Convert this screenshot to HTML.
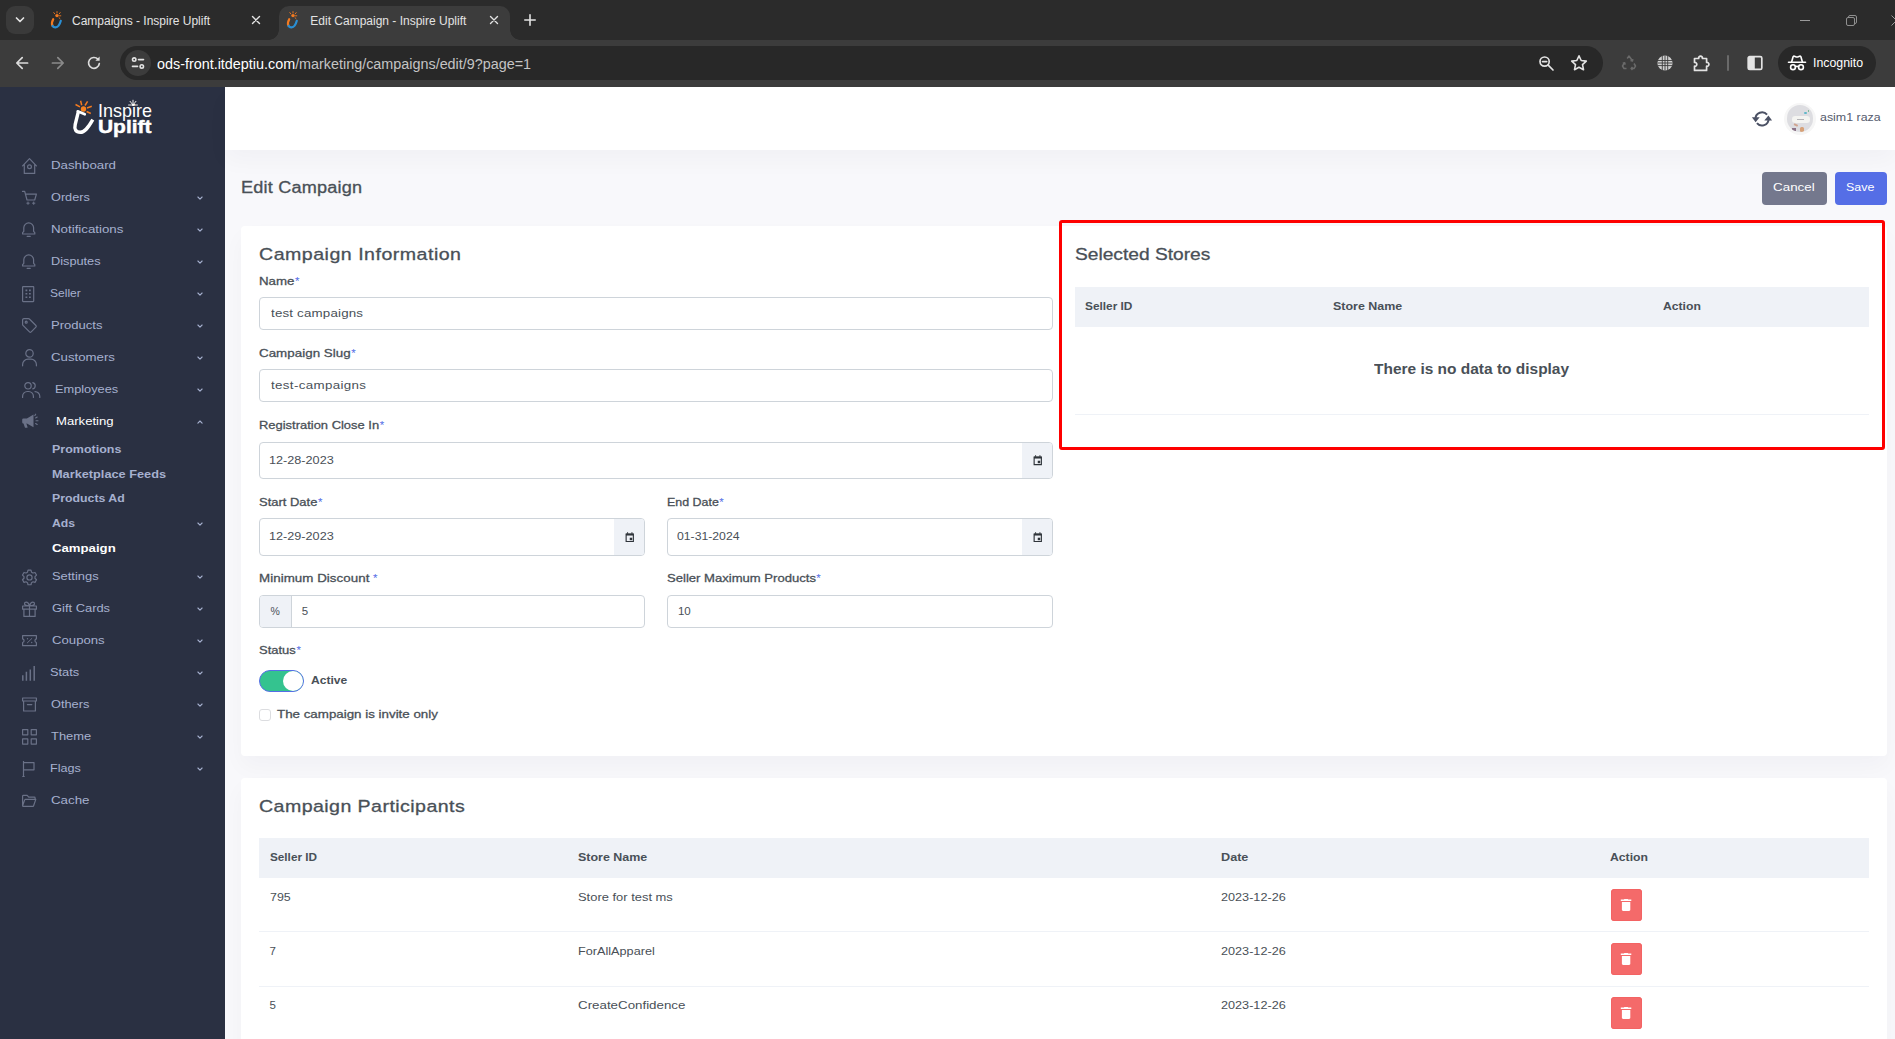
<!DOCTYPE html>
<html lang="en"><head>
<meta charset="utf-8">
<title>Edit Campaign - Inspire Uplift</title>
<style>
*{box-sizing:border-box;margin:0;padding:0}
html,body{width:1895px;height:1039px;overflow:hidden;background:#f8f8fb;font-family:"Liberation Sans",sans-serif;color:#495057;font-size:12px}
.abs{position:absolute}
span.t{position:absolute;white-space:pre;line-height:1}
/* ---------- browser chrome ---------- */
#tabstrip{position:absolute;left:0;top:0;width:1895px;height:40px;background:#2b2b2b}
#toolbar{position:absolute;left:0;top:40px;width:1895px;height:47px;background:#3c3c3c}
#tabsearch{position:absolute;left:6px;top:6px;width:28px;height:28px;border-radius:9px;background:#3a3a3a}
#tab2{position:absolute;left:279px;top:6px;width:231px;height:34px;background:#3c3c3c;border-radius:10px 10px 0 0}
#tab2:before,#tab2:after{content:"";position:absolute;bottom:0;width:10px;height:10px;background:radial-gradient(circle at 0 0,rgba(0,0,0,0) 9.5px,#3c3c3c 10px)}
#tab2:before{left:-10px}
#tab2:after{right:-10px;background:radial-gradient(circle at 100% 0,rgba(0,0,0,0) 9.5px,#3c3c3c 10px)}
.tabt{font-size:12px;color:#e3e3e3}
#omni{position:absolute;left:120px;top:46px;width:1483px;height:34px;border-radius:17px;background:#282828}
#siteinfo{position:absolute;left:125px;top:50px;width:26px;height:26px;border-radius:13px;background:#3c3c3c}
#incog{position:absolute;left:1778px;top:46px;width:98px;height:34px;border-radius:17px;background:#282828}
/* ---------- app ---------- */
#sidebar{position:absolute;left:0;top:87px;width:225px;height:952px;background:#2a3042}
#header{position:absolute;left:225px;top:87px;width:1670px;height:63px;background:#fff;box-shadow:0 11px 22px rgba(18,38,63,.03)}
.mt{font-size:11.500px;color:#a6b0cf}
.st{font-size:11.500px;font-weight:700;color:#a6b0cf}
svg.ic{position:absolute;left:20px;width:22px;height:22px;fill:none;stroke:#6a7187;stroke-width:1.200;stroke-linecap:round;stroke-linejoin:round}
svg.ch{position:absolute;left:196.200px;width:8px;height:8px;fill:none;stroke:#a6b0cf;stroke-width:1.100;stroke-linecap:round;stroke-linejoin:round}
.m5{-webkit-text-stroke:.300px currentColor}
.card{position:absolute;background:#fff;border-radius:4px;box-shadow:0 11px 22px rgba(18,38,63,.03)}
.h4{font-size:18px;color:#495057}
.lbl{font-size:12px;color:#495057}
.lbl i{font-style:normal;color:#556ee6}
.inp{position:absolute;background:#fff;border:1px solid #ced4da;border-radius:4px}
.inp .t{font-size:12px;color:#495057}
.addon{position:absolute;top:0;bottom:0;background:#eff2f7}
.th{position:absolute;background:#eff2f7}
.th .t,.tht{font-size:11.500px;font-weight:700;color:#495057}
.td{font-size:11.500px;color:#495057}
.hr{position:absolute;height:1px;background:#eff2f7}
.del{position:absolute;border-radius:3.500px;background:#f46a6a;box-shadow:inset 0 0 0 1px #f36363}
.del svg{position:absolute;left:0;top:0;width:31px;height:32px;fill:#fff}
.btn{position:absolute;height:33px;border-radius:4px}
.btn .t{color:#fff;font-size:12px;top:10px}
</style>
</head>
<body>
<!-- ======= BROWSER CHROME ======= -->
<div id="tabstrip">
  <div id="tabsearch"></div>
  <div id="tab2"></div>
</div>
<div id="toolbar"></div>
<div id="omni"></div>
<div id="siteinfo"></div>
<div id="incog"></div>
<div id="chrome-fg" class="abs" style="left:0;top:0;width:1895px;height:87px">
<!-- tab search chevron -->
<svg class="abs" style="left:14px;top:15px" width="12" height="10" viewBox="0 0 12 10"><path d="M2.5 3 L6 6.5 L9.5 3" fill="none" stroke="#e3e3e3" stroke-width="1.7" stroke-linecap="round" stroke-linejoin="round"></path></svg>
<!-- favicons -->
<svg class="abs" style="left:49px;top:11px" width="16" height="18" viewBox="0 0 16 18"><g><path d="M4.2 8.2 C3 10.5 2.6 13 3.4 14.6" fill="none" stroke="#f47a20" stroke-width="2.2" stroke-linecap="round"></path><path d="M3.6 15 C5 17 8 16.6 9.6 14.6 C10.8 13 11.4 11.4 11.8 9.8" fill="none" stroke="#2a8fd4" stroke-width="2.2" stroke-linecap="round"></path><circle cx="8" cy="4.6" r="1.7" fill="#f47a20"></circle><path d="M8 .6v1.4M4.8 1.6l.9 1.2M11.2 1.6l-.9 1.2M11.8 4.8h-1.3M11 7.6l-1-.9" stroke="#f47a20" stroke-width=".9" stroke-linecap="round"></path></g></svg>
<svg class="abs" style="left:285px;top:11px" width="16" height="18" viewBox="0 0 16 18"><g><path d="M4.2 8.2 C3 10.5 2.6 13 3.4 14.6" fill="none" stroke="#f47a20" stroke-width="2.2" stroke-linecap="round"></path><path d="M3.6 15 C5 17 8 16.6 9.6 14.6 C10.8 13 11.4 11.4 11.8 9.8" fill="none" stroke="#2a8fd4" stroke-width="2.2" stroke-linecap="round"></path><circle cx="8" cy="4.6" r="1.7" fill="#f47a20"></circle><path d="M8 .6v1.4M4.8 1.6l.9 1.2M11.2 1.6l-.9 1.2M11.8 4.8h-1.3M11 7.6l-1-.9" stroke="#f47a20" stroke-width=".9" stroke-linecap="round"></path></g></svg>
<span class="t tabt" style="left: 72px; top: 15px;">Campaigns - Inspire Uplift</span>
<span class="t tabt" style="left: 310.3px; top: 15px;">Edit Campaign - Inspire Uplift</span>
<!-- close x -->
<svg class="abs" style="left:251px;top:15px" width="10" height="10" viewBox="0 0 10 10"><path d="M1.500 1.500l7 7M8.500 1.500l-7 7" stroke="#e3e3e3" stroke-width="1.400" stroke-linecap="round"></path></svg>
<svg class="abs" style="left:489px;top:15px" width="10" height="10" viewBox="0 0 10 10"><path d="M1.500 1.500l7 7M8.500 1.500l-7 7" stroke="#e3e3e3" stroke-width="1.400" stroke-linecap="round"></path></svg>
<!-- plus -->
<svg class="abs" style="left:524px;top:14px" width="12" height="12" viewBox="0 0 12 12"><path d="M6 .8v10.4M.8 6h10.4" stroke="#e3e3e3" stroke-width="1.6" stroke-linecap="round"></path></svg>
<!-- window controls -->
<div class="abs" style="left:1800px;top:20px;width:10px;height:1px;background:#9a9a9a"></div>
<svg class="abs" style="left:1846px;top:15px" width="11" height="11" viewBox="0 0 11 11"><rect x=".5" y="2.5" width="8" height="8" rx="1.5" fill="none" stroke="#8f8f8f"></rect><path d="M2.5 2.5v-.5a1.5 1.5 0 0 1 1.5-1.5h5a1.500 1.500 0 0 1 1.500 1.500v5a1.500 1.500 0 0 1-1.500 1.500h-.5" fill="none" stroke="#8f8f8f"></path></svg>
<svg class="abs" style="left:1891px;top:15px" width="10" height="11" viewBox="0 0 10 11"><path d="M.5 .5l10 10M10.500 .5l-10 10" stroke="#9a9a9a" stroke-width="1"></path></svg>
<!-- nav arrows -->
<svg class="abs" style="left:14px;top:55px" width="16" height="16" viewBox="0 0 16 16"><path d="M13.600 8H3M8.200 2.600L2.800 8L8.200 13.400" fill="none" stroke="#dcdcdc" stroke-width="1.7" stroke-linecap="round" stroke-linejoin="round"></path></svg>
<svg class="abs" style="left:50px;top:55px" width="16" height="16" viewBox="0 0 16 16"><path d="M2.400 8H13M7.800 2.600L13.200 8L7.800 13.400" fill="none" stroke="#8a8a8a" stroke-width="1.7" stroke-linecap="round" stroke-linejoin="round"></path></svg>
<svg class="abs" style="left:86px;top:55px" width="16" height="16" viewBox="0 0 16 16"><path d="M13.300 8.600A5.400 5.400 0 1 1 11.900 4.200" fill="none" stroke="#dcdcdc" stroke-width="1.700" stroke-linecap="round"></path><path d="M13.600 1.600v4.200h-4.200z" fill="#dcdcdc"></path></svg>
<!-- site info (tune) icon -->
<svg class="abs" style="left:130px;top:55px" width="16" height="16" viewBox="0 0 16 16"><g fill="none" stroke="#e3e3e3" stroke-width="1.600" stroke-linecap="round"><circle cx="4.200" cy="4.600" r="1.700"></circle><path d="M8.500 4.600h5"></path><circle cx="11.800" cy="11.400" r="1.700"></circle><path d="M2.500 11.400h5"></path></g></svg>
<!-- URL -->
<span class="t" style="left: 157px; top: 56.7px; font-size: 14px; color: rgb(196, 196, 196); transform: scaleX(1.026); transform-origin: 0px 0px;"><span style="color:#fff">ods-front.itdeptiu.com</span>/marketing/campaigns/edit/9?page=1</span>
<!-- zoom icon -->
<svg class="abs" style="left:1538px;top:55px" width="17" height="17" viewBox="0 0 17 17"><g fill="none" stroke="#e3e3e3" stroke-width="1.700" stroke-linecap="round"><circle cx="6.600" cy="6.600" r="4.600"></circle><path d="M10.200 10.200l4.800 4.800M4.500 6.600h4.200"></path></g></svg>
<!-- star -->
<svg class="abs" style="left:1570px;top:54px" width="18" height="18" viewBox="0 0 18 18"><path d="M9 1.800l2.200 4.700 5.100.6-3.800 3.500 1 5.100L9 13.200l-4.500 2.500 1-5.100-3.800-3.500 5.100-.6z" fill="none" stroke="#e3e3e3" stroke-width="1.600" stroke-linejoin="round"></path></svg>
<!-- recycle (dim) -->
<svg class="abs" style="left:1621px;top:55px" width="16" height="16" viewBox="0 0 16 16"><g fill="none" stroke="#6a6a6a" stroke-width="1.500" stroke-linejoin="round"><path d="M6.200 3.500L8 1l1.800 2.500L11 5.500M9.500 5.600l1.900.4.500-1.900"></path><path d="M13 8.500l1.500 2.500-1.500 2.500H10.500M11.500 12l-1.400 1.500 1.400 1.400"></path><path d="M5.500 13.500H3L1.500 11 3 8.500M1.800 8.200l1.900-.5.500 1.900"></path></g></svg>
<!-- globe -->
<svg class="abs" style="left:1657px;top:55px" width="16" height="16" viewBox="0 0 16 16"><circle cx="8" cy="8" r="7.600" fill="#d0d0d0"></circle><g stroke="#3c3c3c" stroke-width=".9" fill="none"><path d="M.5 5.500h15M.5 8h15M.5 10.600h15M5.300 .5v15M8 .5v15M10.700 .5v15"></path></g></svg>
<!-- puzzle -->
<svg class="abs" style="left:1692px;top:54px" width="19" height="18" viewBox="0 0 19 18"><path d="M2.500 4.500h4.200a1.900 1.900 0 1 1 3.700 0h4.200v4a1.900 1.900 0 1 1 0 3.700v4.200H2.500v-4.200a1.900 1.900 0 1 0 0-3.700z" fill="none" stroke="#e3e3e3" stroke-width="1.700" stroke-linejoin="round"></path></svg>
<!-- separator -->
<div class="abs" style="left:1727px;top:55px;width:2px;height:16px;background:#6a6a6a;border-radius:1px"></div>
<!-- side panel -->
<svg class="abs" style="left:1747px;top:55px" width="16" height="16" viewBox="0 0 16 16"><rect x="1.200" y="1.600" width="13.600" height="12.800" rx="1.500" fill="none" stroke="#e3e3e3" stroke-width="1.700"></rect><rect x="1.500" y="2" width="6.300" height="12" fill="#e3e3e3"></rect></svg>
<!-- incognito -->
<svg class="abs" style="left:1787px;top:54px" width="20" height="18" viewBox="0 0 20 18"><g fill="none" stroke="#fff" stroke-width="1.600" stroke-linecap="round" stroke-linejoin="round"><path d="M1.500 8.200h17"></path><path d="M4.600 8l1.500-5.200c.2-.6.700-.8 1.300-.6l1.300.5c.8.300 1.800.3 2.600 0l1.300-.5c.6-.2 1.100 0 1.300.6L15.400 8"></path><circle cx="6" cy="13.200" r="2.400"></circle><circle cx="14" cy="13.200" r="2.400"></circle><path d="M8.400 12.800c1-.7 2.200-.7 3.200 0"></path></g></svg>
<span class="t" style="left: 1813px; top: 57px; font-size: 12.5px; color: rgb(255, 255, 255); transform: scaleX(0.986); transform-origin: 0px 0px;">Incognito</span>

</div>

<!-- ======= APP ======= -->
<div id="sidebar"></div>
<div id="sidelayer" class="abs" style="left:0;top:0;width:225px;height:1039px">
<svg class="abs" style="left:70px;top:97px" width="30" height="42" viewBox="70 97 30 42">
<g stroke="#f47b20" stroke-width="1.500" stroke-linecap="butt" fill="none">
<path d="M81.700 105.300L80.600 100.800"></path><path d="M85 105.500L87.600 101.300"></path><path d="M80 106.800L75.500 104.500"></path><path d="M87 108L91.800 106.300"></path><path d="M86.600 111.500L90.800 113.500"></path>
</g>
<circle cx="83.500" cy="109" r="2.700" fill="#f58220"></circle>
<path d="M78.300 111.800L75.200 124.500C74 129.500 76 132.300 80.200 132.300C84.500 132.300 87.800 128.300 92.800 119.600" fill="none" stroke="#fff" stroke-width="3.400" stroke-linecap="butt" stroke-linejoin="round"></path>
<path d="M77.700 111.300L84.800 114.300" fill="none" stroke="#fff" stroke-width="2.600" stroke-linecap="round"></path>
</svg>
<span class="t" style="left: 97.5px; top: 101px; font-size: 19px; color: rgb(255, 255, 255); line-height: 19px; transform: scaleX(0.947); transform-origin: 0px 0px;">Inspire</span>
<span class="t" style="left: 97.5px; top: 117px; font-size: 18.5px; font-weight: 700; color: rgb(255, 255, 255); line-height: 19px; -webkit-text-stroke: 0.45px rgb(255, 255, 255); transform: scaleX(1.132); transform-origin: 0px 0px;">Uplift</span>
<svg class="abs" style="left:127.300px;top:99.300px" width="12" height="8" viewBox="0 0 12 8"><g stroke="#fff" stroke-width=".9" fill="none"><path d="M6 6V.8M6 6L2.800 2M6 6l3.200-4M6 6H1.200M6 6h4.800"></path></g><circle cx="6" cy="6" r="1.100" fill="#fff"></circle></svg>
<svg class="ic" style="top:155px" viewBox="0 0 22 22"><path d="M2.600 10.800L9.500 3.700l6.900 7.100M4.300 9.600v8.800h10.400V9.600"></path><circle cx="9.500" cy="11.800" r="1.900"></circle></svg>
<span class="t mt" style="left: 51.3px; top: 160px; transform: scaleX(1.155); transform-origin: 0px 0px;">Dashboard</span>
<svg class="ic" style="top:187px" viewBox="0 0 22 22"><path d="M2.500 4.400h2.200l2.300 8.600h7.700l1.700-5.900H5.500"></path><path d="M8 15v2.400M6.800 16.200h2.400M13.700 15v2.400M12.500 16.200h2.400" stroke-width="1"></path></svg>
<span class="t mt" style="left: 51.3px; top: 192px; transform: scaleX(1.104); transform-origin: 0px 0px;">Orders</span>
<svg class="ch" style="top:193.8px" viewBox="0 0 8 8"><path d="M1.900 3L4 5.100L6.100 3"></path></svg>
<svg class="ic" style="top:219px" viewBox="0 0 22 22"><path d="M2.600 15V13.700l1.200-1.400V8.800a4.900 4.900 0 0 1 9.800 0v3.500l1.200 1.400V15zM7.200 17.400h3"></path></svg>
<span class="t mt" style="left: 50.5px; top: 224px; transform: scaleX(1.156); transform-origin: 0px 0px;">Notifications</span>
<svg class="ch" style="top:225.8px" viewBox="0 0 8 8"><path d="M1.900 3L4 5.100L6.100 3"></path></svg>
<svg class="ic" style="top:251px" viewBox="0 0 22 22"><path d="M2.600 15V13.700l1.200-1.400V8.800a4.900 4.900 0 0 1 9.800 0v3.500l1.200 1.400V15zM7.200 17.400h3"></path></svg>
<span class="t mt" style="left: 50.5px; top: 256px; transform: scaleX(1.108); transform-origin: 0px 0px;">Disputes</span>
<svg class="ch" style="top:257.8px" viewBox="0 0 8 8"><path d="M1.900 3L4 5.100L6.100 3"></path></svg>
<svg class="ic" style="top:283px" viewBox="0 0 22 22"><rect x="2.600" y="3.600" width="11.100" height="15" rx=".5"></rect><path d="M5.500 6.600h1.800v1.600H5.500zM9 6.600h1.800v1.600H9zM5.500 10h1.800v1.600H5.500zM9 10h1.800v1.600H9zM5.500 13.400h1.800V15H5.500zM9 13.400h1.800V15H9z" fill="#6a7187" stroke="none"></path></svg>
<span class="t mt" style="left: 49.8px; top: 288px; transform: scaleX(1.047); transform-origin: 0px 0px;">Seller</span>
<svg class="ch" style="top:289.8px" viewBox="0 0 8 8"><path d="M1.900 3L4 5.100L6.100 3"></path></svg>
<svg class="ic" style="top:315px" viewBox="0 0 22 22"><path d="M2.600 5v4.400c0 .4.200.8.400 1l6.500 6.500c.5.500 1.200.5 1.700 0l4.700-4.700c.5-.5.500-1.200 0-1.700L9.400 4c-.3-.3-.6-.4-1-.4H4c-.8 0-1.400.6-1.400 1.400z"></path><circle cx="6.200" cy="7.200" r="1"></circle></svg>
<span class="t mt" style="left: 51.3px; top: 320px; transform: scaleX(1.135); transform-origin: 0px 0px;">Products</span>
<svg class="ch" style="top:321.8px" viewBox="0 0 8 8"><path d="M1.900 3L4 5.100L6.100 3"></path></svg>
<svg class="ic" style="top:347px" viewBox="0 0 22 22"><circle cx="9.500" cy="6.400" r="3.700"></circle><path d="M2.600 18.800v-1.200a5.400 5.400 0 0 1 5.400-5.400h3a5.400 5.400 0 0 1 5.400 5.400v1.200"></path></svg>
<span class="t mt" style="left: 51.3px; top: 352px; transform: scaleX(1.151); transform-origin: 0px 0px;">Customers</span>
<svg class="ch" style="top:353.8px" viewBox="0 0 8 8"><path d="M1.900 3L4 5.100L6.100 3"></path></svg>
<svg class="ic" style="top:379px" viewBox="0 0 22 22"><circle cx="8" cy="6.800" r="3.200"></circle><path d="M2.600 18.500v-1.200a4.800 4.800 0 0 1 4.800-4.800h1.200a4.800 4.800 0 0 1 4.800 4.800v1.200"></path><path d="M12.800 3.700a3.200 3.200 0 0 1 0 6.200M15 12.600a4.800 4.800 0 0 1 4.800 4.800v1.100"></path></svg>
<span class="t mt" style="left: 55.1px; top: 384px; transform: scaleX(1.111); transform-origin: 0px 0px;">Employees</span>
<svg class="ch" style="top:385.8px" viewBox="0 0 8 8"><path d="M1.900 3L4 5.100L6.100 3"></path></svg>
<svg class="ic" style="top:411px" viewBox="0 0 22 22"><g fill="#6a7187" stroke="none"><path d="M2.200 8.600a1.200 1.200 0 0 1 1.200-1.200h3.500l6.600-3.800v12.600L6.900 12.400H6.400l1.100 3.500a.7.700 0 0 1-.7.900H5.500a.7.700 0 0 1-.7-.5l-1.300-3.900H3.400a1.200 1.200 0 0 1-1.200-1.200z"></path></g><path d="M15.600 7l1.600-1M16 9.800h2M15.600 12.500l1.600 1M14.800 4.600l.9-1.400" stroke-width="1.100"></path></svg>
<span class="t mt" style="left: 55.9px; top: 416px; color: rgb(255, 255, 255); transform: scaleX(1.141); transform-origin: 0px 0px;">Marketing</span>
<svg class="ch" style="top:417.8px" viewBox="0 0 8 8"><path d="M1.900 5.100L4 3L6.100 5.100"></path></svg>
<svg class="ic" style="top:566px" viewBox="0 0 22 22"><circle cx="9.500" cy="11.400" r="2.600"></circle><path d="M8 3.400h3l.5 2.100 1.500.9 2-.6 1.500 2.600-1.500 1.500v1.700l1.500 1.500-1.500 2.600-2-.6-1.500.9-.5 2.100H8l-.5-2.100-1.500-.9-2 .6-1.500-2.600L4 11.600V9.900L2.500 8.400 4 5.800l2 .6 1.500-.9z" transform="translate(0,.65)"></path></svg>
<span class="t mt" style="left: 51.6px; top: 571px; transform: scaleX(1.121); transform-origin: 0px 0px;">Settings</span>
<svg class="ch" style="top:572.8px" viewBox="0 0 8 8"><path d="M1.900 3L4 5.100L6.100 3"></path></svg>
<svg class="ic" style="top:598px" viewBox="0 0 22 22"><path d="M2.600 8h13.800v3.200H2.600zM3.900 11.200v7.200h11.200v-7.200M9.500 8v10.400M9.500 7.800c-.8-2.600-2-3.600-3.300-3.600-1 0-1.700.7-1.700 1.600 0 1.200 1 2 5 2zM9.500 7.800c.8-2.600 2-3.600 3.300-3.600 1 0 1.700.7 1.700 1.600 0 1.200-1 2-5 2z"></path></svg>
<span class="t mt" style="left: 51.6px; top: 603px; transform: scaleX(1.122); transform-origin: 0px 0px;">Gift Cards</span>
<svg class="ch" style="top:604.8px" viewBox="0 0 8 8"><path d="M1.900 3L4 5.100L6.100 3"></path></svg>
<svg class="ic" style="top:630px" viewBox="0 0 22 22"><path d="M2.600 5.600h13.800v3.200a1.900 1.900 0 0 0 0 3.700v3.200H2.600v-3.200a1.900 1.900 0 0 0 0-3.700z"></path><path d="M7.400 12.800l4.400-4.300" stroke-width="1"></path><circle cx="7.500" cy="8.800" r=".7" fill="#6a7187" stroke="none"></circle><circle cx="11.700" cy="12.500" r=".7" fill="#6a7187" stroke="none"></circle></svg>
<span class="t mt" style="left: 51.6px; top: 635px; transform: scaleX(1.144); transform-origin: 0px 0px;">Coupons</span>
<svg class="ch" style="top:636.8px" viewBox="0 0 8 8"><path d="M1.900 3L4 5.100L6.100 3"></path></svg>
<svg class="ic" style="top:662px" viewBox="0 0 22 22"><path d="M2.800 13.200v5.600M6.400 9.800v9M10.300 7.400v11.400M14.200 4v14.800" stroke-width="1.500" stroke-linecap="butt"></path></svg>
<span class="t mt" style="left: 49.5px; top: 667px; transform: scaleX(1.114); transform-origin: 0px 0px;">Stats</span>
<svg class="ch" style="top:668.8px" viewBox="0 0 8 8"><path d="M1.900 3L4 5.100L6.100 3"></path></svg>
<svg class="ic" style="top:694px" viewBox="0 0 22 22"><path d="M2.600 4h13.800v3H2.600zM3.600 7v10h11.800V7M7.400 10.600h4.400"></path></svg>
<span class="t mt" style="left: 51.4px; top: 699px; transform: scaleX(1.11); transform-origin: 0px 0px;">Others</span>
<svg class="ch" style="top:700.8px" viewBox="0 0 8 8"><path d="M1.900 3L4 5.100L6.100 3"></path></svg>
<svg class="ic" style="top:726px" viewBox="0 0 22 22"><rect x="2.600" y="3.600" width="5.200" height="5.200"></rect><rect x="11.200" y="3.600" width="5.200" height="5.200"></rect><rect x="2.600" y="12.900" width="5.200" height="5.200"></rect><rect x="11.200" y="12.900" width="5.200" height="5.200"></rect></svg>
<span class="t mt" style="left: 51.4px; top: 731px; transform: scaleX(1.123); transform-origin: 0px 0px;">Theme</span>
<svg class="ch" style="top:732.8px" viewBox="0 0 8 8"><path d="M1.900 3L4 5.100L6.100 3"></path></svg>
<svg class="ic" style="top:758px" viewBox="0 0 22 22"><path d="M3.500 3v15.700M2.300 18.500h2.400M3.500 4.600H14v7.200H3.500" stroke-linecap="butt"></path></svg>
<span class="t mt" style="left: 49.5px; top: 763px; transform: scaleX(1.095); transform-origin: 0px 0px;">Flags</span>
<svg class="ch" style="top:764.8px" viewBox="0 0 8 8"><path d="M1.900 3L4 5.100L6.100 3"></path></svg>
<svg class="ic" style="top:790px" viewBox="0 0 22 22"><path d="M2.600 15.500V6.200c0-.4.300-.8.800-.8h3.800l1.500 1.700h5.600c.4 0 .8.300.8.800v1.600M2.600 15.700L4.700 9.900c.1-.3.400-.5.700-.5h10.400l-2.200 6.400c-.1.300-.4.500-.7.500H3.300c-.4 0-.7-.3-.7-.6z"></path></svg>
<span class="t mt" style="left: 51.4px; top: 795px; transform: scaleX(1.158); transform-origin: 0px 0px;">Cache</span>
<span class="t st" style="left: 52.3px; top: 444px; transform: scaleX(1.085); transform-origin: 0px 0px;">Promotions</span>
<span class="t st" style="left: 52.3px; top: 469px; transform: scaleX(1.108); transform-origin: 0px 0px;">Marketplace Feeds</span>
<span class="t st" style="left: 52.3px; top: 493px; transform: scaleX(1.071); transform-origin: 0px 0px;">Products Ad</span>
<span class="t st" style="left: 52.3px; top: 518px; transform: scaleX(1.063); transform-origin: 0px 0px;">Ads</span>
<svg class="ch" style="top:519.8px" viewBox="0 0 8 8"><path d="M1.900 3L4 5.100L6.100 3"></path></svg>
<span class="t st" style="left: 52.3px; top: 543px; color: rgb(255, 255, 255); transform: scaleX(1.146); transform-origin: 0px 0px;">Campaign</span>
</div>
<div id="header">
<svg class="abs" style="left:1526px;top:22.500px" width="22" height="18" viewBox="0 0 22 18"><g fill="none" stroke="#4b5164" stroke-width="2"><path d="M4.400 8.900A6.600 6.600 0 0 1 16.060 4.660"></path><path d="M17.600 8.900A6.600 6.600 0 0 1 5.940 13.140"></path></g><path d="M0.900 7.200h7.800l-4.100 5z" fill="#4b5164"></path><path d="M21.100 10.400h-7.800l4.100-5z" fill="#4b5164"></path></svg>
<div class="abs" style="left:1559px;top:15.500px;width:31.600px;height:32px;border-radius:16px;background:#f6f6f6"></div>
<div class="abs" style="left:1562px;top:18.300px;width:26px;height:27px;border-radius:13.500px;background:#dddde1;overflow:hidden">
  <div class="abs" style="left:4.500px;top:11px;width:18px;height:6.500px;border-radius:3.250px;background:#f4f4f1"></div>
  <div class="abs" style="left:10px;top:13.300px;width:7px;height:1.500px;background:#b4b4b8"></div>
  <div class="abs" style="left:5px;top:22.500px;width:4px;height:3.500px;background:#7d6078;opacity:.85"></div>
  <div class="abs" style="left:13px;top:22px;width:3.500px;height:4.500px;border-radius:1.500px;background:#d69a6c;opacity:.9"></div>
  <div class="abs" style="left:7px;top:18.500px;width:4px;height:1.500px;background:#d0a48e;transform:rotate(25deg)"></div>
  <div class="abs" style="left:17px;top:6.500px;width:2.500px;height:2.500px;border-radius:1.300px;background:#62b8c9"></div>
  <div class="abs" style="left:20.500px;top:4.500px;width:1.600px;height:2px;background:#7fbc95"></div>
</div>
<span class="t" style="left: 1595.3px; top: 25.3px; font-size: 11.5px; color: rgb(85, 91, 109); transform: scaleX(1.079); transform-origin: 0px 0px;">asim1 raza</span>

</div>
<div id="content" class="abs" style="left:0;top:0;width:1895px;height:1039px">
<span class="t m5" style="left: 241.2px; top: 180px; font-size: 15.6px; letter-spacing: 0.17px; transform: scaleX(1.16); transform-origin: 0px 0px;">Edit Campaign</span>
<div class="btn" style="left:1762px;top:172px;width:65px;height:33px;background:#74788d"></div>
<span class="t" style="left: 1773.2px; top: 182px; font-size: 11.5px; color: rgb(255, 255, 255); letter-spacing: 0.04px; transform: scaleX(1.16); transform-origin: 0px 0px;">Cancel</span>
<div class="btn" style="left:1835px;top:172px;width:52px;height:33px;background:#556ee6"></div>
<span class="t" style="left: 1846px; top: 182px; font-size: 11.5px; color: rgb(255, 255, 255); transform: scaleX(1.083); transform-origin: 0px 0px;">Save</span>
<div class="card" style="left:241px;top:226px;width:1646px;height:530px;"></div>
<span class="t m5" style="left: 259.2px; top: 247px; font-size: 16.9px; letter-spacing: 0.42px; transform: scaleX(1.16); transform-origin: 0px 0px;">Campaign Information</span>
<span class="t m5 lbl" style="left: 259px; top: 276px; font-size: 11.5px; transform: scaleX(1.154); transform-origin: 0px 0px;">Name</span>
<span class="t" style="left:295.00px;top:276px;font-size:11.5px;color:#556ee6">*</span>
<span class="t m5 lbl" style="left: 259px; top: 348px; font-size: 11.5px; letter-spacing: 0.03px; transform: scaleX(1.16); transform-origin: 0px 0px;">Campaign Slug</span>
<span class="t" style="left:351.30px;top:348px;font-size:11.5px;color:#556ee6">*</span>
<span class="t m5 lbl" style="left: 259px; top: 420px; font-size: 11.5px; transform: scaleX(1.125); transform-origin: 0px 0px;">Registration Close In</span>
<span class="t" style="left:379.70px;top:420px;font-size:11.5px;color:#556ee6">*</span>
<span class="t m5 lbl" style="left: 259px; top: 497px; font-size: 11.5px; transform: scaleX(1.128); transform-origin: 0px 0px;">Start Date</span>
<span class="t" style="left:318.00px;top:497px;font-size:11.5px;color:#556ee6">*</span>
<span class="t m5 lbl" style="left: 666.8px; top: 497px; font-size: 11.5px; transform: scaleX(1.08); transform-origin: 0px 0px;">End Date</span>
<span class="t" style="left:719.20px;top:497px;font-size:11.5px;color:#556ee6">*</span>
<span class="t m5 lbl" style="left: 259px; top: 573px; font-size: 11.5px; letter-spacing: 0.04px; transform: scaleX(1.16); transform-origin: 0px 0px;">Minimum Discount</span>
<span class="t" style="left:373.00px;top:573px;font-size:11.5px;color:#556ee6">*</span>
<span class="t m5 lbl" style="left: 666.8px; top: 573px; font-size: 11.5px; transform: scaleX(1.137); transform-origin: 0px 0px;">Seller Maximum Products</span>
<span class="t" style="left:816.30px;top:573px;font-size:11.5px;color:#556ee6">*</span>
<span class="t m5 lbl" style="left: 259px; top: 645px; font-size: 11.5px; transform: scaleX(1.129); transform-origin: 0px 0px;">Status</span>
<span class="t" style="left:296.40px;top:645px;font-size:11.5px;color:#556ee6">*</span>
<div class="inp" style="left:259px;top:297px;width:794px;height:33px;"></div>
<span class="t" style="left: 270.8px; top: 308px; font-size: 11.5px; letter-spacing: 0.15px; transform: scaleX(1.16); transform-origin: 0px 0px;">test campaigns</span>
<div class="inp" style="left:259px;top:369px;width:794px;height:33px;"></div>
<span class="t" style="left: 270.8px; top: 380px; font-size: 11.5px; letter-spacing: 0.3px; transform: scaleX(1.16); transform-origin: 0px 0px;">test-campaigns</span>
<div class="inp" style="left:259px;top:442px;width:794px;height:37px;"><div class="addon" style="right:0;width:30px;border-radius:0 3px 3px 0"></div><svg class="abs" style="left:772.8px;top:12.3px" width="9.500" height="10.500" viewBox="0 0 10 11"><path d="M1.200 2.200h7.600v7.900H1.200z" fill="none" stroke="#2f343a" stroke-width="1.200"></path><path d="M1 1.700h8v2H1z" fill="#2f343a"></path><rect x="5" y="6" width="2.600" height="2.600" fill="#2f343a"></rect><path d="M2.700 .3v1.600M7.300 .3v1.600" stroke="#2f343a" stroke-width="1.100"></path></svg></div>
<span class="t" style="left: 269.4px; top: 455px; font-size: 11.5px; transform: scaleX(1.1); transform-origin: 0px 0px;">12-28-2023</span>
<div class="inp" style="left:259px;top:518px;width:386px;height:38px;"><div class="addon" style="right:0;width:30px;border-radius:0 3px 3px 0"></div><svg class="abs" style="left:364.8px;top:12.8px" width="9.500" height="10.500" viewBox="0 0 10 11"><path d="M1.200 2.200h7.600v7.900H1.200z" fill="none" stroke="#2f343a" stroke-width="1.200"></path><path d="M1 1.700h8v2H1z" fill="#2f343a"></path><rect x="5" y="6" width="2.600" height="2.600" fill="#2f343a"></rect><path d="M2.700 .3v1.600M7.300 .3v1.600" stroke="#2f343a" stroke-width="1.100"></path></svg></div>
<span class="t" style="left: 269.4px; top: 531px; font-size: 11.5px; transform: scaleX(1.1); transform-origin: 0px 0px;">12-29-2023</span>
<div class="inp" style="left:667px;top:518px;width:386px;height:38px;"><div class="addon" style="right:0;width:30px;border-radius:0 3px 3px 0"></div><svg class="abs" style="left:364.8px;top:12.8px" width="9.500" height="10.500" viewBox="0 0 10 11"><path d="M1.200 2.200h7.600v7.900H1.200z" fill="none" stroke="#2f343a" stroke-width="1.200"></path><path d="M1 1.700h8v2H1z" fill="#2f343a"></path><rect x="5" y="6" width="2.600" height="2.600" fill="#2f343a"></rect><path d="M2.700 .3v1.600M7.300 .3v1.600" stroke="#2f343a" stroke-width="1.100"></path></svg></div>
<span class="t" style="left: 677.4px; top: 531px; font-size: 11.5px; transform: scaleX(1.062); transform-origin: 0px 0px;">01-31-2024</span>
<div class="inp" style="left:259px;top:595px;width:386px;height:33px;"><div class="addon" style="left:0;width:32px;border-right:1px solid #ced4da;border-radius:3px 0 0 3px"></div></div>
<span class="t" style="left:301.80px;top:606px;font-size:11.5px;">5</span>
<span class="t" style="left:270.50px;top:606px;font-size:10.5px;">%</span>
<div class="inp" style="left:667px;top:595px;width:386px;height:33px;"></div>
<span class="t" style="left:677.90px;top:606px;font-size:11.5px;">10</span>
<div class="abs" style="left:259px;top:670px;width:45px;height:22px;background:#34c38f;border:1px solid #556ee6;border-radius:11px"><div class="abs" style="right:0px;top:0px;width:20px;height:20px;border-radius:10px;background:#fff"></div></div>
<span class="t" style="left: 311.3px; top: 675px; font-size: 11.5px; font-weight: 700; transform: scaleX(1.051); transform-origin: 0px 0px;">Active</span>
<div class="abs" style="left:259px;top:709px;width:11.5px;height:12px;border:1px solid #dcdde0;border-radius:3px;background:#fff"></div>
<span class="t m5" style="left: 276.6px; top: 709px; font-size: 11.5px; transform: scaleX(1.16); transform-origin: 0px 0px;">The campaign is invite only</span>
<span class="t m5" style="left: 1074.7px; top: 247px; font-size: 16.9px; transform: scaleX(1.135); transform-origin: 0px 0px;">Selected Stores</span>
<div class="th" style="left:1075px;top:287px;width:794px;height:40px;"></div>
<span class="t tht" style="left: 1085px; top: 301px; font-size: 11.5px; transform: scaleX(1.03); transform-origin: 0px 0px;">Seller ID</span>
<span class="t tht" style="left: 1333.3px; top: 301px; font-size: 11.5px; transform: scaleX(1.083); transform-origin: 0px 0px;">Store Name</span>
<span class="t tht" style="left: 1662.9px; top: 301px; font-size: 11.5px; transform: scaleX(1.059); transform-origin: 0px 0px;">Action</span>
<span class="t" style="left: 1373.8px; top: 361px; font-size: 15.3px; font-weight: 700; color: rgb(73, 80, 87); transform: scaleX(1.011); transform-origin: 0px 0px;">There is no data to display</span>
<div class="hr" style="left:1075px;top:414px;width:794px;height:1px;"></div>
<div class="abs" style="left:1059px;top:220px;width:826px;height:230px;border:3px solid #fe0000;border-radius:3px"></div>
<div class="card" style="left:241px;top:778px;width:1646px;height:300px;"></div>
<span class="t m5" style="left: 259.1px; top: 799px; font-size: 16.9px; letter-spacing: 0.37px; transform: scaleX(1.16); transform-origin: 0px 0px;">Campaign Participants</span>
<div class="th" style="left:259px;top:838px;width:1610px;height:40px;"></div>
<span class="t tht" style="left: 269.6px; top: 852px; font-size: 11.5px; transform: scaleX(1.021); transform-origin: 0px 0px;">Seller ID</span>
<span class="t tht" style="left: 578.1px; top: 852px; font-size: 11.5px; transform: scaleX(1.084); transform-origin: 0px 0px;">Store Name</span>
<span class="t tht" style="left: 1221.1px; top: 852px; font-size: 11.5px; transform: scaleX(1.099); transform-origin: 0px 0px;">Date</span>
<span class="t tht" style="left: 1610.3px; top: 852px; font-size: 11.5px; transform: scaleX(1.062); transform-origin: 0px 0px;">Action</span>
<span class="t td" style="left: 269.6px; top: 892px; font-size: 11.5px; transform: scaleX(1.079); transform-origin: 0px 0px;">795</span>
<span class="t td" style="left: 578.1px; top: 892px; font-size: 11.5px; transform: scaleX(1.124); transform-origin: 0px 0px;">Store for test ms</span>
<span class="t td" style="left: 1221.1px; top: 892px; font-size: 11.5px; transform: scaleX(1.1); transform-origin: 0px 0px;">2023-12-26</span>
<div class="del" style="left:1611px;top:889px;width:31px;height:32px;"><svg viewBox="0 0 31 32"><path d="M10.900 12.900h8.400v7.900c0 .7-.5 1.200-1.200 1.200h-6c-.7 0-1.200-.5-1.200-1.200z"></path><path d="M9.800 10.600h3.100l.5-.6h3.400l.5.600h3v1.500H9.800z"></path></svg></div>
<span class="t td" style="left:269.60px;top:946px;font-size:11.5px;">7</span>
<span class="t td" style="left: 578.1px; top: 946px; font-size: 11.5px; transform: scaleX(1.102); transform-origin: 0px 0px;">ForAllApparel</span>
<span class="t td" style="left: 1221.1px; top: 946px; font-size: 11.5px; transform: scaleX(1.1); transform-origin: 0px 0px;">2023-12-26</span>
<div class="del" style="left:1611px;top:943px;width:31px;height:32px;"><svg viewBox="0 0 31 32"><path d="M10.900 12.900h8.400v7.900c0 .7-.5 1.200-1.200 1.200h-6c-.7 0-1.200-.5-1.200-1.200z"></path><path d="M9.800 10.600h3.100l.5-.6h3.400l.5.600h3v1.500H9.800z"></path></svg></div>
<span class="t td" style="left:269.60px;top:1000px;font-size:11.5px;">5</span>
<span class="t td" style="left: 578.1px; top: 1000px; font-size: 11.5px; transform: scaleX(1.159); transform-origin: 0px 0px;">CreateConfidence</span>
<span class="t td" style="left: 1221.1px; top: 1000px; font-size: 11.5px; transform: scaleX(1.1); transform-origin: 0px 0px;">2023-12-26</span>
<div class="del" style="left:1611px;top:997px;width:31px;height:32px;"><svg viewBox="0 0 31 32"><path d="M10.900 12.900h8.400v7.900c0 .7-.5 1.200-1.200 1.200h-6c-.7 0-1.200-.5-1.200-1.200z"></path><path d="M9.800 10.600h3.100l.5-.6h3.400l.5.600h3v1.500H9.800z"></path></svg></div>
<div class="hr" style="left:259px;top:931px;width:1610px;height:1px;"></div>
<div class="hr" style="left:259px;top:986px;width:1610px;height:1px;"></div>

</div>


</body></html>
